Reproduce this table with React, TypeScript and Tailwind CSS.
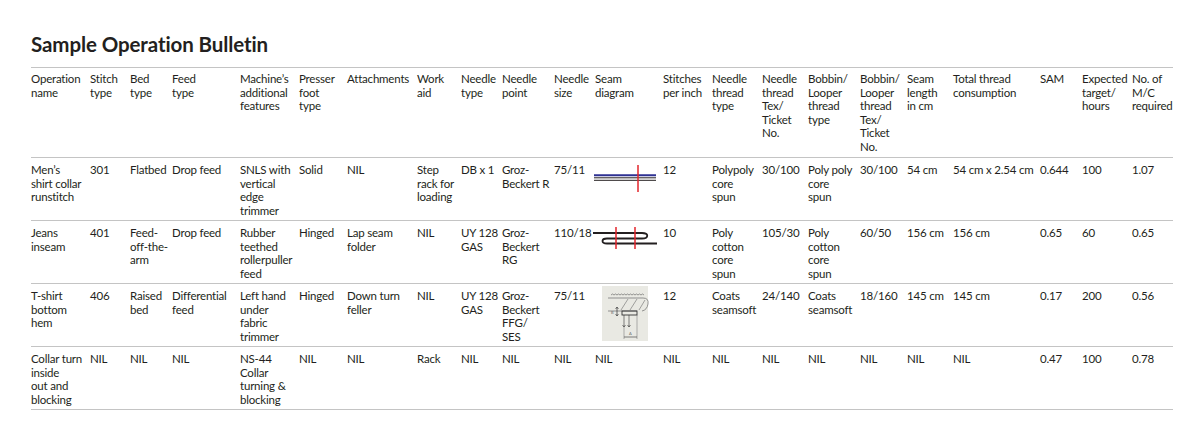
import React from 'react';

const COLS = [
  'w-[59px]', 'w-[40px]', 'w-[42px]', 'w-[68px]', 'w-[59px]', 'w-[48px]', 'w-[70px]', 'w-[44px]',
  'w-[41px]', 'w-[52px]', 'w-[41px]', 'w-[68px]', 'w-[49px]', 'w-[50px]', 'w-[46px]', 'w-[52px]',
  'w-[47px]', 'w-[46px]', 'w-[87px]', 'w-[42px]', 'w-[50px]', 'w-[41px]',
];

const HEADERS = [
  'Operation\nname', 'Stitch\ntype', 'Bed\ntype', 'Feed\ntype', 'Machine’s\nadditional\nfeatures',
  'Presser\nfoot\ntype', 'Attachments', 'Work\naid', 'Needle\ntype', 'Needle\npoint', 'Needle\nsize',
  'Seam\ndiagram', 'Stitches\nper inch', 'Needle\nthread\ntype', 'Needle\nthread\nTex/\nTicket\nNo.',
  'Bobbin/\nLooper\nthread\ntype', 'Bobbin/\nLooper\nthread\nTex/\nTicket\nNo.', 'Seam\nlength\nin cm',
  'Total thread\nconsumption', 'SAM', 'Expected\ntarget/\nhours', 'No. of\nM/C\nrequired',
];

// seam diagram cell holds a key into DIAGRAMS
const ROWS: string[][] = [
  ['Men’s\nshirt collar\nrunstitch', '301', 'Flatbed', 'Drop feed', 'SNLS with\nvertical\nedge\ntrimmer', 'Solid', 'NIL',
    'Step\nrack for\nloading', 'DB x 1', 'Groz-\nBeckert R', '75/11', '@runstitch', '12', 'Polypoly\ncore\nspun', '30/100',
    'Poly poly\ncore\nspun', '30/100', '54 cm', '54 cm x 2.54 cm', '0.644', '100', '1.07'],
  ['Jeans\ninseam', '401', 'Feed-\noff-the-\narm', 'Drop feed', 'Rubber\nteethed\nrollerpuller\nfeed', 'Hinged',
    'Lap seam\nfolder', 'NIL', 'UY 128\nGAS', 'Groz-\nBeckert\nRG', '110/18', '@lapseam', '10', 'Poly\ncotton\ncore\nspun',
    '105/30', 'Poly\ncotton\ncore\nspun', '60/50', '156 cm', '156 cm', '0.65', '60', '0.65'],
  ['T-shirt\nbottom\nhem', '406', 'Raised\nbed', 'Differential\nfeed', 'Left hand\nunder\nfabric\ntrimmer', 'Hinged',
    'Down turn\nfeller', 'NIL', 'UY 128\nGAS', 'Groz-\nBeckert\nFFG/\nSES', '75/11', '@hem', '12', 'Coats\nseamsoft',
    '24/140', 'Coats\nseamsoft', '18/160', '145 cm', '145 cm', '0.17', '200', '0.56'],
  ['Collar turn\ninside\nout and\nblocking', 'NIL', 'NIL', 'NIL', 'NS-44\nCollar\nturning &\nblocking', 'NIL', 'NIL',
    'Rack', 'NIL', 'NIL', 'NIL', 'NIL', 'NIL', 'NIL', 'NIL', 'NIL', 'NIL', 'NIL', 'NIL', '0.47', '100', '0.78'],
];

function RunstitchDiagram() {
  return (
    <svg width="62" height="30" viewBox="0 0 62 30" overflow="visible" className="block">
      <line x1="-1" y1="12.3" x2="61" y2="12.3" stroke="#2e3192" strokeWidth="2" />
      <line x1="-1" y1="14.8" x2="61" y2="14.8" stroke="#231f20" strokeWidth="1" />
      <line x1="-1" y1="17.3" x2="61" y2="17.3" stroke="#231f20" strokeWidth="1" />
      <line x1="43" y1="2" x2="43" y2="29" stroke="#e3242b" strokeWidth="1.5" />
    </svg>
  );
}

function LapSeamDiagram() {
  return (
    <svg width="64" height="24" viewBox="0 0 64 24" overflow="visible" className="block">
      <path d="M-2 7 H47 C54 7 54 12.5 47 12.5 H12 C6 12.5 6 17.5 12 17.5 H62" fill="none" stroke="#231f20" strokeWidth="1.8" />
      <line x1="21" y1="1" x2="21" y2="23" stroke="#e3242b" strokeWidth="1.5" />
      <line x1="40" y1="1" x2="40" y2="23" stroke="#e3242b" strokeWidth="1.5" />
    </svg>
  );
}

function HemDiagram() {
  const g = '#6b6b6b';
  return (
    <svg width="56" height="52" viewBox="0 0 56 52" overflow="visible" className="block">
      <rect x="7" y="-3" width="46" height="55" fill="#e9e9e3" />
      <path d="M16 6 q1.5 -2 3 0 q1.5 -2 3 0 q1.5 -2 3 0 q1.5 -2 3 0 q1.5 -2 3 0 q1.5 -2 3 0 q1.5 -2 3 0 q1.5 -2 3 0 q1.5 -2 3 0 q1.5 -2 3 0 q1.5 -2 3 0"
        fill="none" stroke={g} strokeWidth="0.7" />
      <path d="M13 9 H48 Q54 9 53 15 Q52 21 47 22" fill="none" stroke={g} strokeWidth="0.7" />
      <line x1="13" y1="22" x2="42" y2="22" stroke={g} strokeWidth="0.7" />
      <line x1="33" y1="10" x2="26" y2="21" stroke={g} strokeWidth="0.6" />
      <line x1="42" y1="10" x2="35" y2="21" stroke={g} strokeWidth="0.6" />
      <line x1="50" y1="11" x2="44" y2="21" stroke={g} strokeWidth="0.6" />
      <rect x="27" y="22" width="15" height="4" fill="none" stroke="#333" strokeWidth="0.9" />
      <line x1="22" y1="18" x2="22" y2="27" stroke="#333" strokeWidth="0.7" />
      <path d="M20.5 20 L22 18 L23.5 20 M20.5 25 L22 27 L23.5 25" fill="none" stroke="#333" strokeWidth="0.6" />
      <text x="16" y="25" fontSize="4" fill={g} fontFamily="Lato, sans-serif">B</text>
      <line x1="29" y1="26" x2="29" y2="38" stroke="#333" strokeWidth="0.6" />
      <line x1="34" y1="26" x2="34" y2="38" stroke="#333" strokeWidth="0.6" />
      <path d="M27.5 36 L29 38 L30.5 36 M32.5 36 L34 38 L35.5 36" fill="none" stroke="#333" strokeWidth="0.6" />
      <line x1="29" y1="38" x2="29" y2="50" stroke={g} strokeWidth="0.5" />
      <line x1="42" y1="26" x2="42" y2="50" stroke={g} strokeWidth="0.5" />
      <line x1="29" y1="48" x2="42" y2="48" stroke="#333" strokeWidth="0.6" />
      <text x="34" y="46" fontSize="4" fill={g} fontFamily="Lato, sans-serif">A</text>
    </svg>
  );
}

const DIAGRAMS: Record<string, React.ReactNode> = {
  '@runstitch': <RunstitchDiagram />,
  '@lapseam': <LapSeamDiagram />,
  '@hem': <HemDiagram />,
};

export default function App() {
  return (
    <div className="w-[1200px] h-[443px] bg-white pl-[31px] pt-[33px] text-[#231f20] font-['Lato',sans-serif]">
      <h1 className="text-[20.5px] leading-[22px] font-bold tracking-[-0.1px] mb-[12px]">Sample Operation Bulletin</h1>

      <table className="w-[1142px] table-fixed border-collapse text-[11.5px] leading-[13.5px] tracking-[-0.2px] border-t border-[#c4c4c4]">
        <colgroup>
          {COLS.map((w, i) => (
            <col key={i} className={w} />
          ))}
        </colgroup>
        <thead>
          <tr className="border-b border-[#c4c4c4]">
            {HEADERS.map((h) => (
              <th key={h} className="p-0 pt-[4px] pb-[4px] text-left align-top font-normal whitespace-pre">
                {h}
              </th>
            ))}
          </tr>
        </thead>
        <tbody>
          {ROWS.map((row, r) => (
            <tr key={r} className="border-b border-[#c4c4c4]">
              {row.map((cell, c) => (
                <td key={c} className="p-0 pt-[5px] pb-[3px] align-top whitespace-pre h-[62px]">
                  {DIAGRAMS[cell] ?? cell}
                </td>
              ))}
            </tr>
          ))}
        </tbody>
      </table>
    </div>
  );
}
